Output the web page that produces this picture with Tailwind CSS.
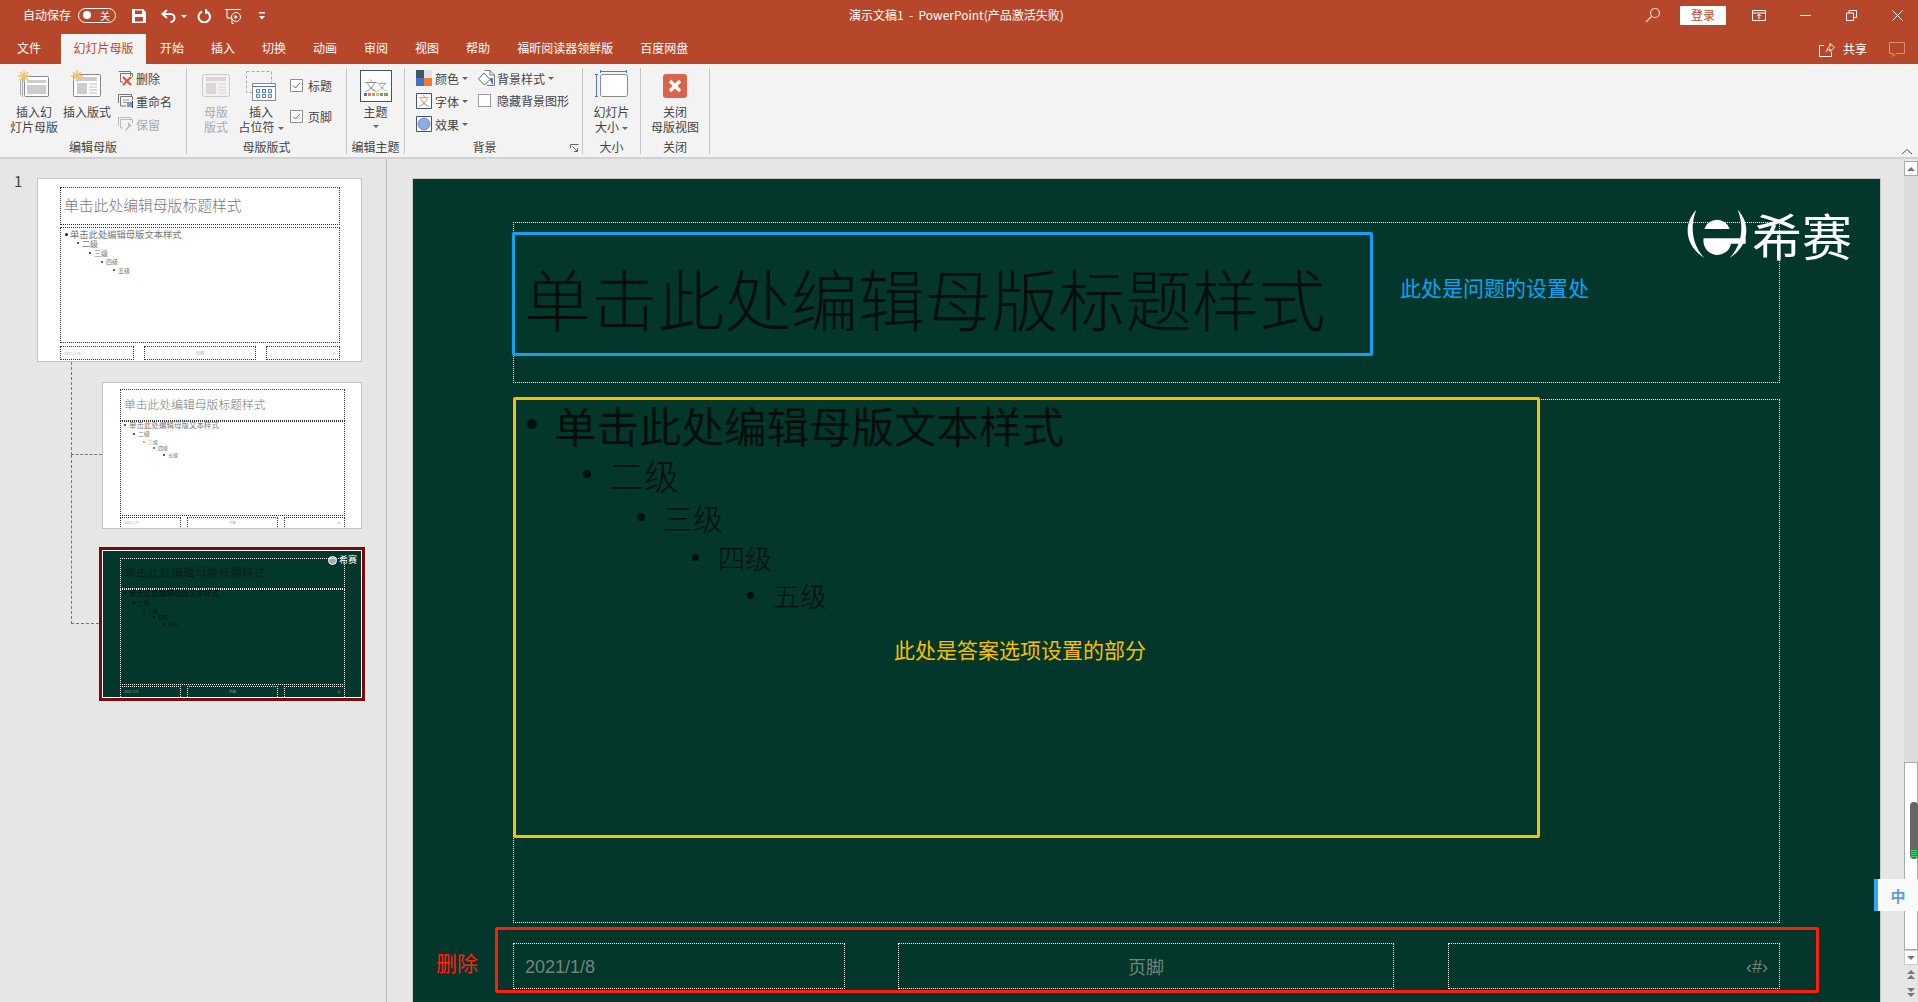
<!DOCTYPE html>
<html>
<head>
<meta charset="UTF-8">
<title>PowerPoint</title>
<script src="https://cdn.jsdelivr.net/npm/@tailwindcss/browser@4"></script>
</head>
<body class="m-0 [font-family:'Noto_Sans_CJK_SC',sans-serif] text-[12px] leading-[15px] text-[#444]">
<div class="relative w-[1918px] h-[1002px] overflow-hidden bg-[#e6e6e6] flex flex-col">

  <!-- title bar -->
  <div class="h-[32px] bg-[#b7472a] text-white flex items-center shrink-0">
    <div class="w-[849px] flex items-center pl-[23px]">
      <span class="w-[55px] mb-[4px]">自动保存</span>
      <div class="w-[38px] h-[15px] mb-[2px] rounded-full border border-white flex items-center justify-between pl-[4px] pr-[5px]">
        <span class="w-[8px] h-[8px] rounded-full bg-white"></span><span class="text-[10px]">关</span>
      </div>
      <svg class="ml-[16px]" width="14" height="14" viewBox="0 0 14 14"><path fill="#fff" d="M0 0H11L14 3V14H0ZM3 1.5V5H10V1.5ZM3 8V12.5H11V8Z"/></svg>
      <svg class="ml-[15px]" width="15" height="14" viewBox="0 0 15 14" fill="none" stroke="#fff" stroke-width="2"><path d="M6 1L1.5 5L6 9M2 5H9.5C12 5 13.5 7 13.5 9C13.5 11 12 13 9.5 13"/></svg>
      <svg class="ml-[5px]" width="6" height="3" viewBox="0 0 6 3"><path fill="#fff" d="M0 0H6L3 3Z"/></svg>
      <svg class="ml-[10px]" width="14" height="14" viewBox="0 0 14 14" fill="none" stroke="#fff" stroke-width="2"><path d="M5 2.5A5.7 5.7 0 1 0 9.5 2.5M9 0V5"/></svg>
      <svg class="ml-[14px]" width="18" height="16" viewBox="0 0 18 16" fill="none" stroke="#fff"><path d="M0 1.5H16M2 1.5V10H6M7 10V15.5H9"/><circle cx="11" cy="9" r="4.5"/><path fill="#fff" stroke="none" d="M9.5 7L13 9L9.5 11Z"/></svg>
      <svg class="ml-[16px]" width="6" height="8" viewBox="0 0 6 8"><path fill="#fff" d="M0 0H6V1.5H0ZM0 4H6L3 7.5Z"/></svg>
    </div>
    <span class="mb-[4px]">演示文稿1&nbsp; -&nbsp; PowerPoint(产品激活失败)</span>
    <div class="ml-auto flex items-center mb-[2px]">
      <svg width="16" height="16" viewBox="0 0 16 16" fill="none" stroke="#f0d8d0" stroke-width="1.2"><circle cx="10" cy="6" r="4.5"/><path d="M6.5 9.5L1 15"/></svg>
      <div class="ml-[19px] w-[46px] h-[19px] rounded-[1px] bg-white text-[#b7472a] text-center leading-[18px]">登录</div>
      <svg class="ml-[26px]" width="14" height="11" viewBox="0 0 14 11" fill="none" stroke="#fff"><path d="M.5.5H13.5V10.5H.5ZM.5 3H13.5M7 9V4.5M5 6L7 4.5L9 6"/></svg>
      <svg class="ml-[34px]" width="11" height="1" viewBox="0 0 11 1"><path fill="#fff" d="M0 0H11V1H0Z"/></svg>
      <svg class="ml-[35px]" width="11" height="11" viewBox="0 0 11 11" fill="none" stroke="#fff"><path d="M.5 3H7.5V10.5H.5ZM3 3V.5H10.5V7.5H7.5"/></svg>
      <svg class="ml-[35px] mr-[15px]" width="11" height="11" viewBox="0 0 11 11" fill="none" stroke="#fff"><path d="M.5.5L10.5 10.5M10.5.5L.5 10.5"/></svg>
    </div>
  </div>

  <!-- tabs -->
  <div class="h-[32px] bg-[#b7472a] text-white flex items-end pl-[17px] shrink-0">
    <div class="flex items-end">
      <span class="h-[30px] leading-[28px] mr-[20px]">文件</span>
      <span class="h-[30px] leading-[28px] w-[85px] text-center mr-[14px] bg-[#f3f3f3] text-[#b7472a]">幻灯片母版</span>
      <span class="h-[30px] leading-[28px] mr-[27px]">开始</span>
      <span class="h-[30px] leading-[28px] mr-[27px]">插入</span>
      <span class="h-[30px] leading-[28px] mr-[27px]">切换</span>
      <span class="h-[30px] leading-[28px] mr-[27px]">动画</span>
      <span class="h-[30px] leading-[28px] mr-[27px]">审阅</span>
      <span class="h-[30px] leading-[28px] mr-[27px]">视图</span>
      <span class="h-[30px] leading-[28px] mr-[27px]">帮助</span>
      <span class="h-[30px] leading-[28px] mr-[27px]">福昕阅读器领鲜版</span>
      <span class="h-[30px] leading-[28px]">百度网盘</span>
    </div>
    <div class="ml-auto h-[30px] flex items-center pr-[13px]">
      <svg width="16" height="15" viewBox="0 0 16 15" fill="none" stroke="#fff"><path d="M5 3.5H.5V14.5H12.5V10M8 8.5C8 6 10 4.5 11 4.5V1.5L15.5 5.5L11 9.5V7C9.5 7 8.5 7.5 7 10"/></svg>
      <span class="ml-[8px] mb-[2px]">共享</span>
      <svg class="ml-[22px]" width="16" height="15" viewBox="0 0 16 15" fill="none" stroke="#d98e78"><path d="M.5.5H15.5V11.5H7L4 14.5V11.5H.5Z"/></svg>
    </div>
  </div>

  <!-- ribbon -->
  <div class="relative h-[95px] bg-[#f3f3f3] border-b-[2px] border-[#d2d2d2] flex pt-[4px] shrink-0">

    <div class="w-[187px] h-[86px] border-r border-[#c6c6c6] flex flex-col">
      <div class="h-[71px] flex pl-[10px]">
        <div class="w-[48px] flex flex-col items-center">
          <svg class="h-[36px]" width="34" height="36" viewBox="17 68 34 36" fill="none">
            <path stroke="#aaa" d="M20.5 80V95M22.5 78V97"/>
            <rect x="24.5" y="76.5" width="24" height="20" rx="1" fill="#fff" stroke="#888"/>
            <path fill="#ccc" d="M27 80H46V83H27ZM27 85H46V94H27Z"/>
            <path stroke="#f2c46d" stroke-width="1.6" d="M24 70V82M18 76H30M20 72L28 80M28 72L20 80"/>
          </svg>
          <span class="text-center">插入幻<br>灯片母版</span>
        </div>
        <div class="ml-[5px] w-[48px] flex flex-col items-center">
          <svg class="h-[36px]" width="34" height="36" viewBox="70 68 34 36" fill="none">
            <rect x="73.5" y="74.5" width="27" height="22" rx="1" fill="#fff" stroke="#888"/>
            <path fill="#ccc" d="M77 77H97V81H77ZM77 83H87V94H77Z"/>
            <path stroke="#bbb" d="M89 84H97M89 87H97M89 90H97M89 93H97"/>
            <path stroke="#f2c46d" stroke-width="1.6" d="M77 70V82M71 76H83M73 72L81 80M81 72L73 80"/>
          </svg>
          <span>插入版式</span>
        </div>
        <div class="ml-[6px] flex flex-col gap-[3px]">
          <div class="h-[20px] flex items-center">
            <svg width="18" height="18" viewBox="0 0 18 18" fill="none" class="mr-[1px]"><path stroke="#777" d="M1.5 2.5H13.5V7M3.5 4.5H15.5V8M3.5 4.5V13H6"/><path stroke="#d9583b" stroke-width="2.2" d="M6 8L14 16M14 8L6 16"/></svg>
            <span>删除</span>
          </div>
          <div class="h-[20px] flex items-center">
            <svg width="18" height="18" viewBox="0 0 18 18" fill="none" class="mr-[1px]"><path stroke="#777" d="M1.5 2.5H14.5V5M1.5 2.5V11M3.5 4.5H15.5V8M3.5 4.5V14H9"/><path stroke="#999" d="M6 8H12M6 10.500H10"/><rect x="10" y="10" width="5" height="5" fill="#7d9cc4"/><path stroke="#444" d="M15.500 9V16"/></svg>
            <span>重命名</span>
          </div>
          <div class="h-[20px] flex items-center text-[#aaa]">
            <svg width="18" height="18" viewBox="0 0 18 18" fill="none" class="mr-[1px]"><path stroke="#bbb" d="M1.500 2.500H13.500V5M1.500 2.500V11M3.500 4.500H15.500V8M3.500 4.500V13H6"/><path fill="#bbb" d="M11 7L15 11L12.500 12L9 16L8 15L11 11.500Z"/></svg>
            <span>保留</span>
          </div>
        </div>
      </div>
      <div class="text-center h-[15px]">编辑母版</div>
    </div>

    <div class="w-[160px] h-[86px] border-r border-[#c6c6c6] flex flex-col">
      <div class="h-[71px] flex pl-[9px]">
        <div class="w-[40px] flex flex-col items-center text-[#aaa] text-center">
          <svg class="h-[36px]" width="30" height="36" viewBox="201 68 30 36" fill="none">
            <rect x="202.500" y="74.500" width="27" height="22" rx="2" fill="#f2f2f2" stroke="#ccc"/>
            <path fill="#dcd6d6" d="M206 77H226V81H206ZM206 83H216V94H206Z"/>
            <path stroke="#d5d5d5" d="M218 84H226M218 87H226M218 90H226M218 93H226"/>
          </svg>
          <span>母版<br>版式</span>
        </div>
        <div class="ml-[1px] w-[48px] flex flex-col items-center text-center">
          <svg class="h-[36px]" width="32" height="36" viewBox="246 68 32 36" fill="none">
            <rect x="247.500" y="71.500" width="25" height="21" stroke="#aaa" stroke-dasharray="3 2"/>
            <rect x="253.500" y="83.500" width="23" height="17" fill="#fff" stroke="#8a8a8a"/>
            <path stroke="#4a7ebb" d="M254 86.500H276"/>
            <path stroke="#4a7ebb" fill="#fff" d="M257.500 89.500H260.500V92.500H257.500ZM263.500 89.500H266.500V92.500H263.500ZM269.500 89.500H272.500V92.500H269.500ZM257.500 94.500H260.500V97.500H257.500ZM263.500 94.500H266.500V97.500H263.500ZM269.500 94.500H272.500V97.500H269.500Z"/>
          </svg>
          <span>插入<br><span class="whitespace-nowrap">占位符<svg class="inline ml-[3px] align-middle" width="6" height="3" viewBox="0 0 6 3"><path fill="#666" d="M0 0H6L3 3Z"/></svg></span></span>
        </div>
        <div class="ml-[5px] pt-[7px] flex flex-col gap-[11px]">
          <div class="h-[20px] flex items-center">
            <svg width="13" height="13" viewBox="0 0 13 13" fill="#fff" stroke="#8e8e8e"><path d="M.5.5H12.500V12.500H.5Z"/><path fill="none" stroke="#666" d="M3 6.500L5.500 9L10 4"/></svg>
            <span class="ml-[5px]">标题</span>
          </div>
          <div class="h-[20px] flex items-center">
            <svg width="13" height="13" viewBox="0 0 13 13" fill="#fff" stroke="#8e8e8e"><path d="M.5.5H12.500V12.500H.5Z"/><path fill="none" stroke="#666" d="M3 6.500L5.500 9L10 4"/></svg>
            <span class="ml-[5px]">页脚</span>
          </div>
        </div>
      </div>
      <div class="text-center h-[15px]">母版版式</div>
    </div>

    <div class="w-[58px] h-[86px] border-r border-[#c6c6c6] flex flex-col">
      <div class="h-[71px] flex flex-col items-center pt-[2px]">
        <svg class="shrink-0 mb-[2px]" width="32" height="32" viewBox="0 0 32 32" fill="none">
          <rect x=".5" y=".5" width="31" height="31" fill="#fff" stroke="#44546a"/>
          <text x="11" y="20" font-size="13" font-weight="300" fill="#777" text-anchor="middle" font-family="Noto Sans CJK SC">文</text>
          <text x="22" y="20" font-size="10" font-weight="300" fill="#777" text-anchor="middle" font-family="Noto Sans CJK SC">文</text>
          <path fill="#4472c4" d="M4 23H7V26H4Z"/><path fill="#ed7d31" d="M8 23H11V26H8Z"/><path fill="#a5a5a5" d="M12 23H15V26H12Z"/><path fill="#ffc000" d="M16 23H19V26H16Z"/><path fill="#5b9bd5" d="M20 23H23V26H20Z"/><path fill="#70ad47" d="M24 23H28V26H24Z"/>
        </svg>
        <span>主题</span>
        <svg class="mt-[6px]" width="6" height="3" viewBox="0 0 6 3"><path fill="#666" d="M0 0H6L3 3Z"/></svg>
      </div>
      <div class="text-center h-[15px] whitespace-nowrap">编辑主题</div>
    </div>

    <div class="relative w-[178px] h-[86px] border-r border-[#c6c6c6] flex flex-col">
      <div class="h-[71px] flex pl-[11px]">
        <div class="w-[62px] flex flex-col gap-[3px]">
          <div class="h-[20px] flex items-center">
            <svg width="16" height="16" viewBox="0 0 16 16"><path fill="#44546a" d="M0 0H8V8H0Z"/><path fill="#e0e0e0" d="M8 0H16V8H8Z"/><path fill="#4472c4" d="M0 8H8V16H0Z"/><path fill="#ed7d31" d="M8 8H16V16H8Z"/></svg>
            <span class="ml-[3px]">颜色</span>
            <svg class="ml-[3px]" width="6" height="3" viewBox="0 0 6 3"><path fill="#666" d="M0 0H6L3 3Z"/></svg>
          </div>
          <div class="h-[20px] flex items-center">
            <svg width="16" height="16" viewBox="0 0 16 16" fill="none"><path fill="#fff" stroke="#44546a" d="M.5.5H15.500V15.500H.5Z"/><text x="8" y="12.500" font-size="12" font-weight="300" fill="#a0705a" text-anchor="middle" font-family="Noto Sans CJK SC">文</text></svg>
            <span class="ml-[3px]">字体</span>
            <svg class="ml-[3px]" width="6" height="3" viewBox="0 0 6 3"><path fill="#666" d="M0 0H6L3 3Z"/></svg>
          </div>
          <div class="h-[20px] flex items-center">
            <svg width="16" height="16" viewBox="0 0 16 16"><path fill="#fff" stroke="#44546a" d="M.5.5H15.500V15.500H.5Z"/><circle cx="8" cy="8" r="6" fill="#8faadc" stroke="#6f8fc8"/></svg>
            <span class="ml-[3px]">效果</span>
            <svg class="ml-[3px]" width="6" height="3" viewBox="0 0 6 3"><path fill="#666" d="M0 0H6L3 3Z"/></svg>
          </div>
        </div>
        <div class="flex flex-col gap-[2px]">
          <div class="h-[20px] flex items-center">
            <svg width="17" height="17" viewBox="0 0 17 17" fill="none"><path fill="#fff" stroke="#777" d="M6.500.5H12L16.500 5V15.500H9"/><path stroke="#777" d="M12 .5V5H16.500"/><path fill="#fff" stroke="#666" d="M6 3L12 9.500L6.500 15L.5 9Z"/><path fill="#4a7ebb" d="M12 8H15V14H14L12 10Z"/></svg>
            <span class="ml-[2px]">背景样式</span>
            <svg class="ml-[3px]" width="6" height="3" viewBox="0 0 6 3"><path fill="#666" d="M0 0H6L3 3Z"/></svg>
          </div>
          <div class="h-[20px] flex items-center">
            <span class="w-[13px] h-[13px] border border-[#9a9a9a] bg-white"></span>
            <span class="ml-[6px]">隐藏背景图形</span>
          </div>
        </div>
      </div>
      <div class="text-center h-[15px] pr-[18px]">背景</div>
      <svg class="absolute right-[3px] bottom-[1px]" width="9" height="9" viewBox="0 0 9 9" fill="none" stroke="#666"><path d="M.5 4V.5H8.500M2.500 2.500L7 7M7.500 4V7.500H4"/></svg>
    </div>

    <div class="w-[58px] h-[86px] border-r border-[#c6c6c6] flex flex-col">
      <div class="h-[71px] flex flex-col items-center text-center">
        <svg class="h-[36px]" width="34" height="36" viewBox="596 68 34 36" fill="none">
          <rect x="601.500" y="74.500" width="27" height="22" rx="2" fill="#fff" stroke="#8a8a8a"/>
          <path stroke="#4a7ebb" d="M601 71.500H628M601.500 70V73M627.500 70V73M597.500 74V97M596 74.500H599M596 96.500H599"/>
        </svg>
        <span class="whitespace-nowrap">幻灯片<br>大小<svg class="inline ml-[3px] align-middle" width="6" height="3" viewBox="0 0 6 3"><path fill="#666" d="M0 0H6L3 3Z"/></svg></span>
      </div>
      <div class="text-center h-[15px]">大小</div>
    </div>

    <div class="w-[69px] h-[86px] border-r border-[#c6c6c6] flex flex-col">
      <div class="h-[71px] flex flex-col items-center text-center">
        <svg class="h-[36px]" width="26" height="36" viewBox="662 68 26 36" fill="none">
          <rect x="663" y="74" width="24" height="24" rx="3" fill="#d9644a"/>
          <path stroke="#fff" stroke-width="3.500" d="M670 81L680 91M680 81L670 91"/>
        </svg>
        <span>关闭<br>母版视图</span>
      </div>
      <div class="text-center h-[15px]">关闭</div>
    </div>

    <svg class="absolute right-[6px] bottom-[3px]" width="10" height="5" viewBox="0 0 10 5" fill="none" stroke="#555"><path d="M0 5L5 .5L10 5"/></svg>
  </div>

  <!-- workspace -->
  <div class="flex-1 flex min-h-0">

    <!-- thumbnails -->
    <div class="relative w-[387px] shrink-0 border-r border-[#bdbdbd] flex flex-col pt-[19px]">
      <span class="absolute left-[14px] top-[13px] text-[15px] leading-[18px]">1</span>
      <div class="absolute left-[71px] top-[203px] w-[31px] h-[93px] border-l border-b border-dashed border-[#777]"></div>
      <div class="absolute left-[71px] top-[296px] w-[28px] h-[169px] border-l border-b border-dashed border-[#777]"></div>

      <div class="relative ml-[37px] w-[325px] h-[184px] bg-white border border-[#c4c4c4] text-[#777] shrink-0">
        <div class="absolute left-[22px] top-[8px] w-[280px] h-[38px] border border-dotted border-[#333]"></div>
        <span class="absolute left-[26px] top-[16px] text-[14.800px] leading-[20px] font-light">单击此处编辑母版标题样式</span>
        <div class="absolute left-[22px] top-[48px] w-[280px] h-[116px] border border-dotted border-[#333]"></div>
        <span class="absolute left-[32px] top-[49px] text-[9.300px] leading-[12px] whitespace-nowrap">单击此处编辑母版文本样式</span>
        <span class="absolute left-[27px] top-[54px] w-[3px] h-[3px] rounded-full bg-[#222]"></span>
        <span class="absolute left-[44px] top-[59px] text-[8px] leading-[12px]">二级</span>
        <span class="absolute left-[39px] top-[63px] w-[2px] h-[2px] rounded-full bg-[#222]"></span>
        <span class="absolute left-[56px] top-[68px] text-[7px] leading-[12px]">三级</span>
        <span class="absolute left-[51px] top-[73px] w-[2px] h-[2px] rounded-full bg-[#222]"></span>
        <span class="absolute left-[68px] top-[77px] text-[6px] leading-[12px]">四级</span>
        <span class="absolute left-[63px] top-[82px] w-[2px] h-[2px] rounded-full bg-[#222]"></span>
        <span class="absolute left-[80px] top-[86px] text-[6px] leading-[12px]">五级</span>
        <span class="absolute left-[75px] top-[90px] w-[2px] h-[2px] rounded-full bg-[#222]"></span>
        <div class="absolute left-[22px] top-[167px] w-[74px] h-[14px] border border-dotted border-[#333] text-[4px] leading-[12px] text-[#aaa] pl-[3px]">2021/1/8</div>
        <div class="absolute left-[106px] top-[167px] w-[112px] h-[14px] border border-dotted border-[#333] text-[4px] leading-[12px] text-[#aaa] text-center">页脚</div>
        <div class="absolute left-[228px] top-[167px] w-[74px] h-[14px] border border-dotted border-[#333] text-[4px] leading-[12px] text-[#aaa] text-right pr-[3px]">‹#›</div>
      </div>

      <div class="relative ml-[102px] mt-[20px] w-[260px] h-[147px] bg-white border border-[#c4c4c4] text-[#777] overflow-hidden shrink-0">
        <div class="absolute left-[17px] top-[6px] w-[225px] h-[32px] border border-dotted border-[#333]"></div>
        <span class="absolute left-[21px] top-[13px] text-[11.800px] leading-[16px] font-light">单击此处编辑母版标题样式</span>
        <div class="absolute left-[17px] top-[38px] w-[225px] h-[95px] border border-dotted border-[#333]"></div>
        <span class="absolute left-[26px] top-[36px] text-[7.500px] leading-[12px] whitespace-nowrap">单击此处编辑母版文本样式</span>
        <span class="absolute left-[21px] top-[41px] w-[2px] h-[2px] rounded-full bg-[#222]"></span>
        <span class="absolute left-[35px] top-[45px] text-[6px] leading-[12px]">二级</span>
        <span class="absolute left-[30px] top-[50px] w-[2px] h-[2px] rounded-full bg-[#222]"></span>
        <span class="absolute left-[45px] top-[53px] text-[5px] leading-[12px]">三级</span>
        <span class="absolute left-[40px] top-[58px] w-[2px] h-[2px] rounded-full bg-[#d28a30]"></span>
        <span class="absolute left-[55px] top-[59px] text-[5px] leading-[12px]">四级</span>
        <span class="absolute left-[50px] top-[64px] w-[2px] h-[2px] rounded-full bg-[#b03030]"></span>
        <span class="absolute left-[65px] top-[66px] text-[5px] leading-[12px]">五级</span>
        <span class="absolute left-[60px] top-[71px] w-[2px] h-[2px] rounded-full bg-[#222]"></span>
        <div class="absolute left-[17px] top-[134px] w-[61px] h-[16px] border border-dotted border-[#333] text-[3.500px] leading-[10px] text-[#aaa] pl-[3px]">2021/1/8</div>
        <div class="absolute left-[84px] top-[134px] w-[91px] h-[16px] border border-dotted border-[#333] text-[3.500px] leading-[10px] text-[#aaa] text-center">页脚</div>
        <div class="absolute left-[181px] top-[134px] w-[61px] h-[16px] border border-dotted border-[#333] text-[3.500px] leading-[10px] text-[#aaa] text-right pr-[3px]">‹#›</div>
      </div>

      <div class="relative ml-[99px] mt-[18px] w-[266px] h-[154px] border-[3px] border-[#7a0a12] bg-white shrink-0 p-[1px]">
        <div class="relative w-full h-full bg-[#03372b] overflow-hidden text-[#04140f]">
          <div class="absolute left-[17px] top-[7px] w-[225px] h-[31px] border border-dotted border-white"></div>
          <span class="absolute left-[21px] top-[13px] text-[11.800px] leading-[16px] font-light">单击此处编辑母版标题样式</span>
          <span class="absolute left-[236px] top-[3px] text-[9px] leading-[12px] text-white whitespace-nowrap">希赛</span>
          <span class="absolute left-[225px] top-[5px] w-[9px] h-[9px] rounded-full border border-white bg-white/60"></span>
          <div class="absolute left-[17px] top-[38px] w-[225px] h-[96px] border border-dotted border-white"></div>
          <span class="absolute left-[26px] top-[36px] text-[7.500px] leading-[12px] whitespace-nowrap">单击此处编辑母版文本样式</span>
          <span class="absolute left-[21px] top-[41px] w-[2px] h-[2px] rounded-full bg-black"></span>
          <span class="absolute left-[35px] top-[46px] text-[6px] leading-[12px]">二级</span>
          <span class="absolute left-[30px] top-[51px] w-[2px] h-[2px] rounded-full bg-black"></span>
          <span class="absolute left-[45px] top-[54px] text-[5px] leading-[12px]">三级</span>
          <span class="absolute left-[40px] top-[59px] w-[2px] h-[2px] rounded-full bg-black"></span>
          <span class="absolute left-[55px] top-[60px] text-[5px] leading-[12px]">四级</span>
          <span class="absolute left-[50px] top-[65px] w-[2px] h-[2px] rounded-full bg-black"></span>
          <span class="absolute left-[65px] top-[67px] text-[5px] leading-[12px]">五级</span>
          <span class="absolute left-[60px] top-[72px] w-[2px] h-[2px] rounded-full bg-black"></span>
          <div class="absolute left-[17px] top-[135px] w-[61px] h-[13px] border border-dotted border-white text-[3.500px] leading-[10px] text-[#8a9a95] pl-[3px]">2021/1/8</div>
          <div class="absolute left-[84px] top-[135px] w-[91px] h-[13px] border border-dotted border-white text-[3.500px] leading-[10px] text-[#8a9a95] text-center">页脚</div>
          <div class="absolute left-[181px] top-[135px] w-[61px] h-[13px] border border-dotted border-white text-[3.500px] leading-[10px] text-[#8a9a95] text-right pr-[3px]">‹#›</div>
        </div>
      </div>
    </div>

    <!-- slide area -->
    <div class="flex-1 min-w-0 pl-[26px] pt-[20px] overflow-hidden">
      <div class="relative w-[1467px] h-[900px] bg-[#03372b] outline outline-[#c8c8c8] text-[#020f0b]">
        <div class="absolute left-[100px] top-[43px] w-[1267px] h-[161px] border border-dotted border-white"></div>
        <div class="absolute left-[99px] top-[53px] w-[861px] h-[124px] border-[3px] border-[#12a0f0] rounded-[2px]"></div>
        <span class="absolute left-[111px] top-[78px] text-[66.800px] leading-[80px] font-light whitespace-nowrap">单击此处编辑母版标题样式</span>
        <span class="absolute left-[987px] top-[93px] text-[21px] leading-[30px] text-[#0ea2f5] whitespace-nowrap">此处是问题的设置处</span>

        <div class="absolute left-[1272px] top-[30px] w-[64px] h-[50px]">
          <svg width="64" height="50" viewBox="255 628 190 150" fill="#fff">
            <path d="M288 630C250 670 250 735 312 775C275 735 268 680 288 630Z"/>
            <path d="M412 630C450 670 450 735 388 775C425 735 432 680 412 630Z"/>
            <path d="M312 688A40 40 0 0 1 388 688Z"/>
            <path d="M310 716H436V732H392A40 40 0 0 1 310 716Z"/>
          </svg>
        </div>
        <span class="absolute left-[1339px] top-[27px] text-[50px] leading-[56px] text-white whitespace-nowrap">希赛</span>

        <div class="absolute left-[100px] top-[220px] w-[1267px] h-[524px] border border-dotted border-white"></div>
        <div class="absolute left-[100px] top-[218px] w-[1027px] h-[441px] border-[3px] border-[#f7c000] rounded-[2px]"></div>

        <div class="absolute left-[114px] top-[220px] h-[50px] flex items-center whitespace-nowrap text-[42.500px]">
          <span class="w-[10px] h-[10px] rounded-full bg-[#020f0b] mr-[17px]"></span>单击此处编辑母版文本样式
        </div>
        <div class="absolute left-[170px] top-[273px] h-[44px] flex items-center whitespace-nowrap text-[35px] font-light">
          <span class="w-[8px] h-[8px] rounded-full bg-[#020f0b] mr-[18px]"></span>二级
        </div>
        <div class="absolute left-[224px] top-[318px] h-[40px] flex items-center whitespace-nowrap text-[30px] font-light">
          <span class="w-[8px] h-[8px] rounded-full bg-[#020f0b] mr-[18px]"></span>三级
        </div>
        <div class="absolute left-[279px] top-[358px] h-[40px] flex items-center whitespace-nowrap text-[27px] font-light">
          <span class="w-[7px] h-[7px] rounded-full bg-[#020f0b] mr-[19px]"></span>四级
        </div>
        <div class="absolute left-[334px] top-[396px] h-[40px] flex items-center whitespace-nowrap text-[27px] font-light">
          <span class="w-[7px] h-[7px] rounded-full bg-[#020f0b] mr-[19px]"></span>五级
        </div>
        <span class="absolute left-[481px] top-[455px] text-[21px] leading-[30px] text-[#f7c000] whitespace-nowrap">此处是答案选项设置的部分</span>

        <span class="absolute left-[23px] top-[768px] text-[21px] leading-[30px] text-[#ff2010] whitespace-nowrap">删除</span>
        <div class="absolute left-[82px] top-[748px] w-[1324px] h-[66px] border-[3px] border-[#ff1e0e] rounded-[2px]"></div>
        <div class="absolute left-[100px] top-[764px] w-[332px] h-[46px] border border-dotted border-white flex items-center pl-[11px] pt-[3px] text-[18px] text-[#75837f] [font-family:'Liberation_Sans',sans-serif]">2021/1/8</div>
        <div class="absolute left-[485px] top-[764px] w-[496px] h-[46px] border border-dotted border-white flex items-center justify-center pt-[1px] text-[18px] text-[#75837f]">页脚</div>
        <div class="absolute left-[1035px] top-[764px] w-[332px] h-[46px] border border-dotted border-white flex items-center justify-end pr-[11px] pt-[3px] text-[18px] text-[#75837f] [font-family:'Liberation_Sans',sans-serif]">‹#›</div>
      </div>
    </div>

    <!-- scrollbar -->
    <div class="w-[14px] shrink-0 flex flex-col pt-[2px]">
      <div class="h-[15px] bg-white border border-[#aaa] flex items-center justify-center shrink-0">
        <svg width="8" height="4" viewBox="0 0 8 4"><path fill="#777" d="M0 4L4 0L8 4Z"/></svg>
      </div>
      <div class="h-[586px] bg-[#dcdcdc] shrink-0"></div>
      <div class="h-[188px] bg-white border border-[#aaa] shrink-0"></div>
      <div class="h-[15px] bg-white border border-[#ccc] flex items-center justify-center shrink-0">
        <svg width="8" height="4" viewBox="0 0 8 4"><path fill="#777" d="M0 0L4 4L8 0Z"/></svg>
      </div>
      <div class="mt-[5px] flex justify-center shrink-0">
        <svg width="8" height="9" viewBox="0 0 8 9"><path fill="#777" d="M0 4L4 0L8 4ZM0 9L4 5L8 9Z"/></svg>
      </div>
      <div class="mt-[9px] flex justify-center shrink-0">
        <svg width="8" height="9" viewBox="0 0 8 9"><path fill="#777" d="M0 0L4 4L8 0ZM0 5L4 9L8 5Z"/></svg>
      </div>
    </div>
  </div>

  <!-- ime widgets floating on top -->
  <div class="absolute left-[1910px] top-[802px] w-[8px] h-[57px] rounded-t-full rounded-b-full bg-[#666] flex flex-col justify-end gap-[1px] pb-[2px] px-[1px]">
    <span class="h-[1px] bg-[#3ddc6a]"></span><span class="h-[1px] bg-[#3ddc6a]"></span><span class="h-[1px] bg-[#3ddc6a]"></span><span class="h-[1px] bg-[#3ddc6a]"></span>
  </div>
  <div class="absolute left-[1874px] top-[879px] w-[44px] h-[32px] bg-[#fafafa] border-l-[4px] border-[#2ea8ff] flex items-center justify-center text-[15px] font-bold text-[#5b9fd0]">中</div>
</div>
</body>
</html>
